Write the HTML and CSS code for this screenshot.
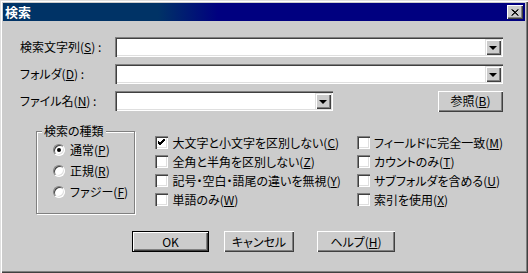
FILE: index.html
```html
<!DOCTYPE html>
<html lang="ja">
<head>
    <meta charset="UTF-8">
    <title>検索</title>
    <link rel="stylesheet" href="styles.css">
</head>
<body>
    <div class="window">
        <div class="titlebar">
            <span class="title">検索</span>
            <span class="close-btn">
                <svg width="8" height="7" viewBox="0 0 8 7"><path d="M0.5 0.5 L7 6.5 M1.5 0.5 L7.5 6.5 M7 0.5 L0.5 6.5 M7.5 0.5 L1 6.5" stroke="#000" stroke-width="1"/></svg>
            </span>
        </div>

        <div class="content">
            <div class="field-row">
                <label class="field-label">検索文字列(<u>S</u>) :</label>
                <div class="combo combo-wide"><span class="combo-btn"><span class="arrow"></span></span></div>
            </div>
            <div class="field-row">
                <label class="field-label">フォルダ(<u>D</u>) :</label>
                <div class="combo combo-wide"><span class="combo-btn"><span class="arrow"></span></span></div>
            </div>
            <div class="field-row">
                <label class="field-label">ファイル名(<u>N</u>) :</label>
                <div class="combo combo-short"><span class="combo-btn"><span class="arrow"></span></span></div>
                <button class="btn btn-browse">参照(<u>B</u>)</button>
            </div>

            <div class="options">
                <fieldset class="group">
                    <legend>検索の種類</legend>
                    <div class="radio-row"><span class="radio checked"><span class="dot"></span></span>通常(<u>P</u>)</div>
                    <div class="radio-row"><span class="radio"></span>正規(<u>R</u>)</div>
                    <div class="radio-row"><span class="radio"></span>ファジー(<u>F</u>)</div>
                </fieldset>

                <div class="checks checks-left">
                    <div class="check-row"><span class="checkbox"><svg width="7" height="7" viewBox="0 0 7 7"><path d="M0 2 L2 4 L7 -1 M0 3 L2 5 L7 0 M0 4 L2 6 L7 1" stroke="#000" stroke-width="1" fill="none"/></svg></span>大文字と小文字を区別しない(<u>C</u>)</div>
                    <div class="check-row"><span class="checkbox"></span>全角と半角を区別しない(<u>Z</u>)</div>
                    <div class="check-row"><span class="checkbox"></span>記号・空白・語尾の違いを無視(<u>Y</u>)</div>
                    <div class="check-row"><span class="checkbox"></span>単語のみ(<u>W</u>)</div>
                </div>

                <div class="checks">
                    <div class="check-row"><span class="checkbox"></span>フィールドに完全一致(<u>M</u>)</div>
                    <div class="check-row"><span class="checkbox"></span>カウントのみ(<u>T</u>)</div>
                    <div class="check-row"><span class="checkbox"></span>サブフォルダを含める(<u>U</u>)</div>
                    <div class="check-row"><span class="checkbox"></span>索引を使用(<u>X</u>)</div>
                </div>
            </div>

            <div class="actions">
                <button class="btn btn-default btn-ok">OK</button>
                <button class="btn btn-cancel">キャンセル</button>
                <button class="btn btn-help">ヘルプ(<u>H</u>)</button>
            </div>
        </div>
    </div>
</body>
</html>
```

FILE: styles.css
```css
body {
    margin: 0;
    font-family: "Noto Sans CJK JP", "Noto Sans", sans-serif;
    font-size: 12px;
    line-height: 14px;
    color: #000;
    font-feature-settings: "palt";
}

.window {
    width: 528px;
    height: 273px;
    box-sizing: border-box;
    padding: 3px;
    background-color: #cccccc;
    box-shadow: inset 1px 1px #dfdfdf, inset 2px 2px #fff, inset -1px -1px #404040, inset -2px -2px #808080;
    display: flex;
    flex-direction: column;
}

.titlebar {
    height: 18px;
    display: flex;
    align-items: center;
    justify-content: space-between;
    padding: 0 2px;
    background: linear-gradient(90deg, #003366 0, #003366 155px, #000080 215px);
}

.title {
    color: #fff;
    font-weight: bold;
    font-size: 13px;
}

.close-btn {
    width: 16px;
    height: 14px;
    box-sizing: border-box;
    display: flex;
    align-items: center;
    justify-content: center;
    background-color: #cccccc;
    box-shadow: inset 1px 1px #fff, inset -1px -1px #404040, inset -2px -2px #808080;
}

.close-btn svg {
    display: block;
}

.content {
    flex: 1;
    display: flex;
    flex-direction: column;
    padding: 16px 22px 0 17px;
}

.field-row {
    display: flex;
    align-items: center;
    height: 20px;
    margin-bottom: 7px;
}

.field-label {
    width: 95px;
    flex-shrink: 0;
}

.combo {
    height: 20px;
    box-sizing: border-box;
    padding: 2px;
    background-color: #fff;
    box-shadow: inset 1px 1px #808080, inset 2px 2px #404040, inset -1px -1px #fff, inset -2px -2px #dfdfdf;
    display: flex;
    justify-content: flex-end;
}

.combo-wide {
    flex: 1;
}

.combo-short {
    width: 218px;
}

.combo-btn {
    width: 16px;
    height: 16px;
    box-sizing: border-box;
    display: flex;
    align-items: center;
    justify-content: center;
    background-color: #cccccc;
    box-shadow: inset 1px 1px #dfdfdf, inset 2px 2px #fff, inset -1px -1px #404040, inset -2px -2px #808080;
}

.arrow {
    width: 0;
    height: 0;
    border-left: 4px solid transparent;
    border-right: 4px solid transparent;
    border-top: 4px solid #000;
    margin-top: 1px;
}

.btn {
    font-family: inherit;
    font-size: 12px;
    line-height: 14px;
    font-feature-settings: "palt";
    color: #000;
    height: 21px;
    padding: 0;
    border: none;
    background-color: #cccccc;
    box-shadow: inset 1px 1px #fff, inset -1px -1px #404040, inset -2px -2px #808080;
}

.btn-browse {
    width: 65px;
    margin-left: auto;
}

.btn-default {
    box-shadow: inset 0 0 0 1px #000, inset 2px 2px #fff, inset -2px -2px #404040, inset -3px -3px #808080;
}

.options {
    display: flex;
    align-items: flex-start;
}

.group {
    margin: 6px 0 0 16px;
    padding: 1px 0 11px 16px;
    width: 102px;
    box-sizing: border-box;
    border: 1px solid #808080;
    box-shadow: inset 1px 1px #fff, 1px 1px #fff;
    min-inline-size: 0;
}

.group legend {
    padding: 0 2px;
    margin-left: -11px;
    background-color: #cccccc;
}

.radio-row {
    display: flex;
    align-items: center;
    height: 21px;
    white-space: nowrap;
}

.radio {
    width: 12px;
    height: 12px;
    box-sizing: border-box;
    border-radius: 50%;
    margin-right: 5px;
    background-color: #fff;
    border: 1px solid;
    border-color: #808080 #fff #fff #808080;
    box-shadow: inset 1px 1px #404040, inset -1px -1px #dfdfdf;
    display: flex;
    align-items: center;
    justify-content: center;
}

.dot {
    width: 4px;
    height: 4px;
    border-radius: 50%;
    background-color: #000;
}

.checks {
    margin-top: 15px;
    display: flex;
    flex-direction: column;
}

.checks-left {
    width: 208px;
    margin-left: 20px;
}

.check-row {
    display: flex;
    align-items: center;
    height: 19px;
    white-space: nowrap;
}

.checkbox {
    width: 13px;
    height: 13px;
    box-sizing: border-box;
    margin-right: 4px;
    flex-shrink: 0;
    background-color: #fff;
    box-shadow: inset 1px 1px #808080, inset 2px 2px #404040, inset -1px -1px #fff, inset -2px -2px #dfdfdf;
    display: flex;
    align-items: center;
    justify-content: center;
}

.checkbox svg {
    display: block;
}

.actions {
    display: flex;
    margin-top: 17px;
    padding-left: 112px;
}

.btn-ok {
    width: 77px;
}

.btn-cancel {
    width: 70px;
    margin-left: 15px;
}

.btn-help {
    width: 78px;
    margin-left: 23px;
}
```
